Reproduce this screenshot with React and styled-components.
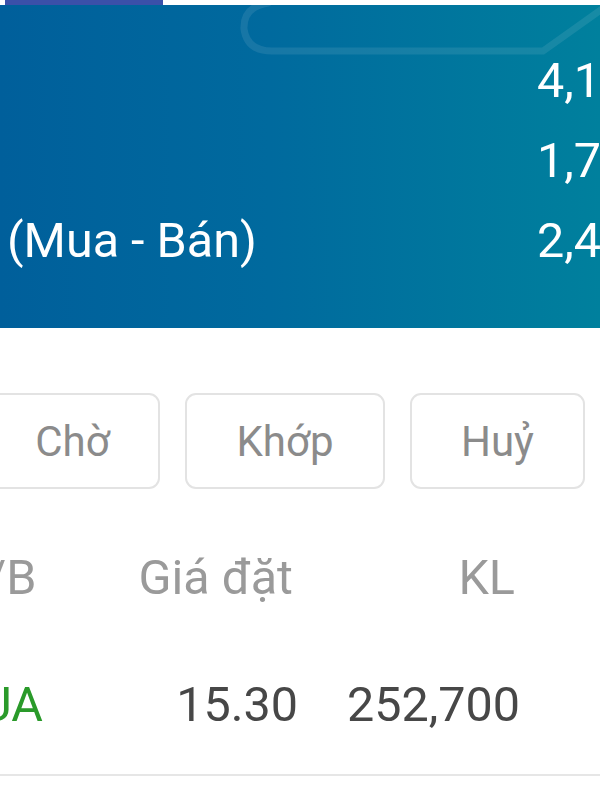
import React from "react";
import styled, { createGlobalStyle } from "styled-components";

const Global = createGlobalStyle`
  html, body { margin: 0; padding: 0; background: #ffffff; }
  body { font-family: Roboto, "Noto Sans", "Liberation Sans", sans-serif; }
  * { box-sizing: border-box; }
`;

const Screen = styled.div`
  width: 600px;
  height: 800px;
  overflow: hidden;
  background: #ffffff;
  display: flex;
  flex-direction: column;
`;

const TabStrip = styled.div`
  height: 5px;
  flex: none;
  background: #ffffff;
  padding-left: 5px;
`;

const TabIndicator = styled.div`
  width: 158px;
  height: 100%;
  background: #3b50a9;
`;

const Summary = styled.section`
  position: relative;
  flex: none;
  height: 323px;
  padding-top: 36px;
  background: linear-gradient(90deg, #005f9b 0%, #006a9e 45%, #00809d 100%);
  color: #ffffff;
  overflow: hidden;
`;

const Deco = styled.svg`
  position: absolute;
  left: 0;
  top: 0;
  width: 600px;
  height: 80px;
  pointer-events: none;
`;

const SummaryRow = styled.div`
  position: relative;
  display: grid;
  grid-template-columns: 537px 1fr;
  height: 80px;
  line-height: 80px;
  font-size: 48.5px;
  white-space: nowrap;
`;

const SummaryLabel = styled.span`
  padding-left: 7px;
`;

const SummaryValue = styled.span``;

const Body = styled.section`
  flex: none;
  display: flex;
  flex-direction: column;
`;

const FilterRow = styled.div`
  display: flex;
  gap: 25px;
  margin-top: 65px;
  margin-left: -15px;
`;

const FilterButton = styled.div`
  flex: none;
  width: ${(p) => p.$w}px;
  height: 96px;
  display: flex;
  align-items: center;
  justify-content: center;
  border: 2px solid #e3e3e3;
  border-radius: 11px;
  color: #8b8b8b;
  font-size: 42px;
`;

const HeadWrap = styled.div`
  padding-top: 39px;
`;

const DataWrap = styled.div`
  padding-top: 27px;
  padding-bottom: 19px;
  border-bottom: 2px solid #e6e6e6;
`;

const TableRow = styled.div`
  display: grid;
  grid-template-columns: 150px 210px 222px;
  margin-left: -62px;
  height: 100px;
  line-height: 100px;
  font-size: 48.5px;
  white-space: nowrap;
  color: ${(p) => (p.$head ? "#9a9a9a" : "#474747")};
`;

const Cell = styled.span`
  text-align: ${(p) => p.$align || "left"};
  color: ${(p) => p.$color || "inherit"};
  padding-right: ${(p) => p.$pr || 0}px;
  padding-left: ${(p) => p.$pl || 0}px;
`;

export default function App() {
  return (
    <>
      <Global />
      <Screen>
        <TabStrip>
          <TabIndicator />
        </TabStrip>
        <Summary>
          <Deco viewBox="0 0 600 80">
            <path
              d="M 268 -2 Q 243 2 244 24 Q 247 46 272 46 L 543 46 L 602 4"
              fill="none"
              stroke="rgba(255,255,255,0.09)"
              strokeWidth="7"
              strokeLinecap="round"
            />
          </Deco>
          <SummaryRow>
            <SummaryLabel />
            <SummaryValue>4,1</SummaryValue>
          </SummaryRow>
          <SummaryRow>
            <SummaryLabel />
            <SummaryValue>1,7</SummaryValue>
          </SummaryRow>
          <SummaryRow>
            <SummaryLabel>(Mua - Bán)</SummaryLabel>
            <SummaryValue>2,4</SummaryValue>
          </SummaryRow>
        </Summary>
        <Body>
          <FilterRow>
            <FilterButton $w={175}>Chờ</FilterButton>
            <FilterButton $w={200}>Khớp</FilterButton>
            <FilterButton $w={175}>Huỷ</FilterButton>
          </FilterRow>
          <HeadWrap>
            <TableRow $head>
              <Cell $pl={6}>M/B</Cell>
              <Cell $align="right" $pr={5}>Giá đặt</Cell>
              <Cell $align="right" $pr={5}>KL</Cell>
            </TableRow>
          </HeadWrap>
          <DataWrap>
            <TableRow>
              <Cell $pl={-1} $color="#2a9a2a">MUA</Cell>
              <Cell $align="right">15.30</Cell>
              <Cell $align="right">252,700</Cell>
            </TableRow>
          </DataWrap>
        </Body>
      </Screen>
    </>
  );
}
